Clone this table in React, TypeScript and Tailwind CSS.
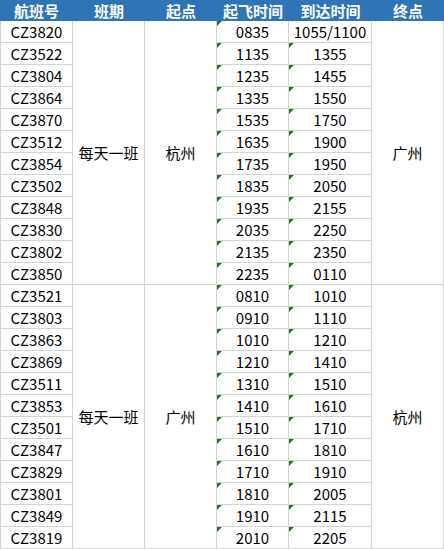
import React from 'react';

type Group = {
  freq: string;
  from: string;
  to: string;
  rows: { no: string; dep: string; arr: string; arrMark: boolean }[];
};

const build = (nos: string[], deps: string[], arrs: string[]) =>
  nos.map((no, i) => ({ no, dep: deps[i], arr: arrs[i], arrMark: arrs[i].indexOf('/') === -1 }));

const groups: Group[] = [
  {
    freq: '每天一班',
    from: '杭州',
    to: '广州',
    rows: build(
      ['CZ3820', 'CZ3522', 'CZ3804', 'CZ3864', 'CZ3870', 'CZ3512', 'CZ3854', 'CZ3502', 'CZ3848', 'CZ3830', 'CZ3802', 'CZ3850'],
      ['0835', '1135', '1235', '1335', '1535', '1635', '1735', '1835', '1935', '2035', '2135', '2235'],
      ['1055/1100', '1355', '1455', '1550', '1750', '1900', '1950', '2050', '2155', '2250', '2350', '0110']
    ),
  },
  {
    freq: '每天一班',
    from: '广州',
    to: '杭州',
    rows: build(
      ['CZ3521', 'CZ3803', 'CZ3863', 'CZ3869', 'CZ3511', 'CZ3853', 'CZ3501', 'CZ3847', 'CZ3829', 'CZ3801', 'CZ3849', 'CZ3819'],
      ['0810', '0910', '1010', '1210', '1310', '1410', '1510', '1610', '1710', '1810', '1910', '2010'],
      ['1010', '1110', '1210', '1410', '1510', '1610', '1710', '1810', '1910', '2005', '2115', '2205']
    ),
  },
];

const headers = ['航班号', '班期', '起点', '起飞时间', '到达时间', '终点'];
const headerWidths = ['w-[73px]', 'w-[72px]', 'w-[72px]', 'w-[72px]', 'w-[83px]', 'w-[72px]'];

const cell = 'flex items-center justify-center border-r border-b border-[#d4d4d4] h-[22px]';

const Mark = () => (
  <span className="absolute left-0 top-0 w-0 h-0 border-t-[5px] border-r-[5px] border-t-[#1e7b1e] border-r-transparent" />
);

export default function App() {
  return (
    <div
      className="w-[444px] h-[549px] bg-white text-[15px] leading-none text-black overflow-hidden"
      style={{ fontFamily: '"Noto Sans CJK SC", "Noto Sans", sans-serif' }}
    >
      <div className="flex h-[21px] bg-[#2f75b5] text-white font-bold">
        {headers.map((h, i) => (
          <div key={h} className={`${headerWidths[i]} flex items-center justify-center`}>
            {h}
          </div>
        ))}
      </div>
      <div className="grid grid-cols-[72px_72px_72px_72px_83px_72px] border-l border-[#d4d4d4]">
        {groups.map((g, gi) => (
          <React.Fragment key={gi}>
            {g.rows.map((r, ri) => (
              <React.Fragment key={r.no}>
                <div className={cell}>{r.no}</div>
                {ri === 0 && (
                  <>
                    <div className="row-span-12 flex items-center justify-center border-r border-b border-[#d4d4d4]">
                      {g.freq}
                    </div>
                    <div className="row-span-12 flex items-center justify-center border-r border-b border-[#d4d4d4]">
                      {g.from}
                    </div>
                  </>
                )}
                <div className={`${cell} relative`}>
                  <Mark />
                  {r.dep}
                </div>
                <div className={`${cell} relative`}>
                  {r.arrMark && <Mark />}
                  {r.arr}
                </div>
                {ri === 0 && (
                  <div className="row-span-12 flex items-center justify-center border-r border-b border-[#d4d4d4]">
                    {g.to}
                  </div>
                )}
              </React.Fragment>
            ))}
          </React.Fragment>
        ))}
      </div>
    </div>
  );
}
